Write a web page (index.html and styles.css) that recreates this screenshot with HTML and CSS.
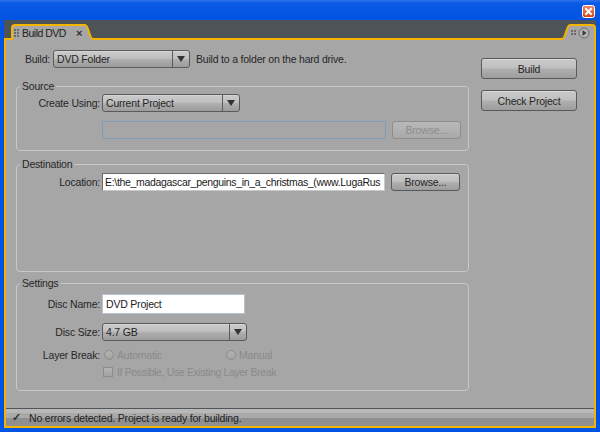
FILE: index.html
```html
<!DOCTYPE html>
<html>
<head>
<meta charset="utf-8">
<title>Build DVD</title>
<link rel="stylesheet" href="styles.css">
</head>
<body>
<div class="window">
  <div class="titlebar">
    <span class="close-btn">
      <svg width="13" height="13" viewBox="0 0 13 13">
        <defs>
          <linearGradient id="cg" x1="0" y1="0" x2="0" y2="1">
            <stop offset="0" stop-color="#f08a6a"/>
            <stop offset="1" stop-color="#d2400f"/>
          </linearGradient>
        </defs>
        <rect x="0.5" y="0.5" width="12" height="12" rx="2" fill="url(#cg)" stroke="#ffffff"/>
        <path d="M4 4 L9 9 M9 4 L4 9" stroke="#ffffff" stroke-width="2" stroke-linecap="square"/>
      </svg>
    </span>
  </div>
  <div class="dock">
    <div class="tabstrip">
      <div class="tab-lead"></div>
      <div class="tab">
        <span class="grip"></span>
        <span class="tab-title">Build DVD</span>
        <span class="tab-close">×</span>
      </div>
      <svg class="slant" width="8" height="16" viewBox="0 0 8 16">
        <path d="M0 1 C4 1 4 15 8 15 L8 16 L0 16 Z" fill="#a6a6a6"/>
        <path d="M0 1 C4 1 4 15 8 15" fill="none" stroke="#f5b400" stroke-width="2"/>
      </svg>
      <div class="tab-gap"></div>
      <svg class="slant" width="8" height="16" viewBox="0 0 8 16">
        <path d="M0 15 C4 15 4 1 8 1 L8 16 L0 16 Z" fill="#a6a6a6"/>
        <path d="M0 15 C4 15 4 1 8 1" fill="none" stroke="#f5b400" stroke-width="2"/>
      </svg>
      <div class="tab-menu">
        <span class="grip grip-small"></span>
        <svg class="flyout" width="12" height="12" viewBox="0 0 12 12">
          <circle cx="6" cy="6" r="5" fill="#b4b4b4" stroke="#6c6c6c"/>
          <path d="M4.5 3 L8.5 6 L4.5 9 Z" fill="#3c3c3c"/>
        </svg>
      </div>
    </div>
    <div class="panel">
      <div class="content">
        <div class="form-col">
          <div class="build-row">
            <span class="build-label">Build:</span>
            <div class="select build-select"><span class="select-value">DVD Folder</span><span class="select-arrow"><span class="tri"></span></span></div>
            <span class="build-desc">Build to a folder on the hard drive.</span>
          </div>

          <fieldset class="group group-source">
            <legend>Source</legend>
            <div class="grid">
              <span class="lbl">Create Using:</span>
              <div class="select source-select"><span class="select-value">Current Project</span><span class="select-arrow"><span class="tri"></span></span></div>
              <span></span>
              <div class="path-row">
                <div class="input input-disabled source-input"></div>
                <span class="btn btn-small btn-disabled">Browse...</span>
              </div>
            </div>
          </fieldset>

          <fieldset class="group group-dest">
            <legend>Destination</legend>
            <div class="grid">
              <span class="lbl">Location:</span>
              <div class="path-row">
                <div class="input input-white dest-input">E:\the_madagascar_penguins_in_a_christmas_(www.LugaRus</div>
                <span class="btn btn-small">Browse...</span>
              </div>
            </div>
          </fieldset>

          <fieldset class="group group-settings">
            <legend>Settings</legend>
            <div class="grid settings-grid">
              <span class="lbl">Disc Name:</span>
              <div class="input input-white name-input">DVD Project</div>
              <span class="lbl lbl-size">Disc Size:</span>
              <div class="select size-select"><span class="select-value">4.7 GB</span><span class="select-arrow"><span class="tri"></span></span></div>
              <span class="lbl lbl-layer">Layer Break:</span>
              <div class="radio-row">
                <span class="opt opt-auto"><span class="radio"></span>Automatic</span>
                <span class="opt"><span class="radio"></span>Manual</span>
              </div>
              <span></span>
              <div class="check-row"><span class="check"></span>If Possible, Use Existing Layer Break</div>
            </div>
          </fieldset>
        </div>
        <div class="btn-col">
          <span class="btn btn-big">Build</span>
          <span class="btn btn-big">Check Project</span>
        </div>
      </div>
      <div class="status"><span class="status-check">✓</span>No errors detected. Project is ready for building.</div>
    </div>
  </div>
</div>
</body>
</html>
```
FILE: styles.css
```css
* { box-sizing: border-box; }
html, body { margin: 0; padding: 0; }
body {
  background: #0054e3;
  font-family: "Liberation Sans", Arial, sans-serif;
  font-size: 10.5px;
  letter-spacing: -0.2px;
  color: #262626;
}
.window {
  width: 600px;
  height: 432px;
  display: flex;
  flex-direction: column;
  background: #0054e3;
  overflow: hidden;
}
.titlebar {
  height: 20px;
  flex: 0 0 20px;
  display: flex;
  justify-content: flex-end;
  align-items: flex-start;
  padding: 5px 5px 0 0;
  background: linear-gradient(#2f72ea 0, #0a5ae6 3px, #0054e3 100%);
}
.close-btn { display: block; width: 13px; height: 13px; }
.close-btn svg { display: block; }

.dock {
  flex: 1;
  margin: 0 4px 4px 4px;
  background: #4e5358;
  display: flex;
  flex-direction: column;
}
.tabstrip {
  height: 20px;
  flex: 0 0 20px;
  padding-top: 4px;
  display: flex;
}
.tab-lead {
  width: 7px;
  border-bottom: 2px solid #f5b400;
}
.tab {
  width: 74px;
  background: #a6a6a6;
  border-top: 2px solid #f5b400;
  border-left: 2px solid #f5b400;
  border-top-left-radius: 4px;
  display: flex;
  align-items: center;
  padding-left: 1px;
  font-size: 10.5px;
  letter-spacing: -0.5px;
}
.grip {
  width: 6px;
  height: 9px;
  margin-right: 2px;
  background-image: radial-gradient(circle at 1px 1px, #6a6a6a 0.8px, transparent 1px);
  background-size: 3px 3px;
}
.grip-small { width: 6px; height: 6px; margin-right: 1px; }
.tab-title { color: #222; }
.tab-close { margin-left: 10px; font-weight: bold; font-size: 11px; color: #333; }
.slant { display: block; flex: 0 0 8px; }
.tab-gap {
  flex: 1;
  border-bottom: 2px solid #f5b400;
}
.tab-menu {
  width: 26px;
  background: #a6a6a6;
  border-top: 2px solid #f5b400;
  border-right: 2px solid #f5b400;
  border-top-right-radius: 4px;
  display: flex;
  align-items: center;
  padding-left: 1px;
}
.flyout { display: block; }

.panel {
  flex: 1;
  background: #a6a6a6;
  border: 2px solid #f5b400;
  border-top: none;
  display: flex;
  flex-direction: column;
}
.content {
  flex: 1;
  display: flex;
}
.form-col {
  width: 453px;
  margin-left: 10px;
  padding-top: 10px;
}
.btn-col {
  width: 96px;
  margin-left: 12px;
  padding-top: 18px;
  display: flex;
  flex-direction: column;
  gap: 11px;
}

.build-row {
  display: flex;
  align-items: center;
  height: 18px;
}
.build-label { width: 34px; text-align: right; margin-right: 3px; }
.build-desc { margin-left: 6px; }

.select {
  height: 18px;
  display: flex;
  border: 1px solid #5a5a5a;
  border-radius: 3px;
  background: linear-gradient(#cacaca 0, #c0c0c0 45%, #adadad 55%, #9c9c9c 100%);
  box-shadow: inset 0 1px 0 #d6d6d6;
}
.select-value { flex: 1; padding-left: 3px; line-height: 16px; white-space: nowrap; overflow: hidden; }
.select-arrow {
  width: 17px;
  border-left: 1px solid #5a5a5a;
  display: flex;
  align-items: center;
  justify-content: center;
}
.tri {
  width: 0; height: 0;
  border-left: 4px solid transparent;
  border-right: 4px solid transparent;
  border-top: 6px solid #333;
}
.build-select { width: 137px; }
.source-select { width: 138px; }
.size-select { width: 145px; }

.group {
  margin: 0;
  border: 1px solid #c8c8c8;
  border-radius: 4px;
  padding: 0;
  min-width: 0;
}
.group legend {
  margin-left: 3px;
  padding: 0 2px;
  line-height: 12px;
  height: 12px;
}
.group-source { margin-top: 12px; padding-top: 2px; padding-bottom: 11px; }
.group-dest { margin-top: 7px; padding-top: 3px; padding-bottom: 80px; }
.group-settings { margin-top: 5px; padding-top: 5px; padding-bottom: 11px; }

.grid {
  display: grid;
  grid-template-columns: 83px 1fr;
  column-gap: 2px;
  row-gap: 9px;
  align-items: center;
}
.lbl { text-align: right; white-space: nowrap; }
.path-row { display: flex; align-items: center; }
.input {
  height: 18px;
  line-height: 16px;
  padding-left: 3px;
  white-space: nowrap;
  overflow: hidden;
}
.input-disabled { border: 1px solid #7f9db9; background: #a6a6a6; }
.input-white { border: 1px solid #7b7b7b; background: #ffffff; color: #1a1a1a; }
.source-input { width: 284px; }
.dest-input {
  width: 283px;
  padding-left: 2px;
  letter-spacing: -0.32px;
  border-color: #6a6a6a #c8c8c8 #c8c8c8 #6a6a6a;
}
.name-input { width: 143px; height: 20px; line-height: 18px; border-color: #b8c2d0; }

.btn {
  display: flex;
  align-items: center;
  justify-content: center;
  border: 1px solid #555a5e;
  border-radius: 3px;
  background: linear-gradient(#c9c9c9 0, #c0c0c0 45%, #aeaeae 55%, #9d9d9d 100%);
  box-shadow: inset 0 1px 0 #d8d8d8;
  color: #262626;
  white-space: nowrap;
}
.btn-small { width: 69px; height: 18px; margin-left: 6px; }
.btn-big { height: 21px; }
.btn-disabled {
  color: #8c8c8c;
  border-color: #8e8e8e;
  background: linear-gradient(#b8b8b8 0, #b2b2b2 50%, #a8a8a8 100%);
  box-shadow: none;
}

.settings-grid { row-gap: 0; }
.settings-grid .size-select { margin-top: 9px; }
.lbl-size { margin-top: 9px; }
.lbl-layer { margin-top: 7px; }
.radio-row { display: flex; margin-top: 7px; padding-left: 2px; height: 14px; align-items: center; color: #8a8a8a; }
.opt { display: flex; align-items: center; }
.opt-auto { width: 122px; }
.radio {
  width: 10px; height: 10px;
  border: 1px solid #8c8c8c;
  border-radius: 50%;
  background: linear-gradient(#b4b4b4, #a2a2a2);
  margin-right: 3px;
}
.check-row { display: flex; align-items: center; height: 14px; margin-top: 3px; padding-left: 1px; color: #8a8a8a; letter-spacing: -0.35px; }
.check {
  width: 10px; height: 10px;
  border: 1px solid #8c8c8c;
  background: linear-gradient(#b4b4b4, #a2a2a2);
  margin-right: 4px;
}

.status {
  height: 18px;
  flex: 0 0 18px;
  border-top: 1px solid #4f555b;
  background: linear-gradient(#b8b8b8 0, #b8b8b8 4px, #a9a9a9 4px, #a9a9a9 9px, #8f8f8f 9px, #8f8f8f 100%);
  display: flex;
  align-items: center;
  padding-left: 6px;
  color: #222;
}
.status-check { width: 17px; font-size: 11px; font-weight: bold; color: #333; }
```
